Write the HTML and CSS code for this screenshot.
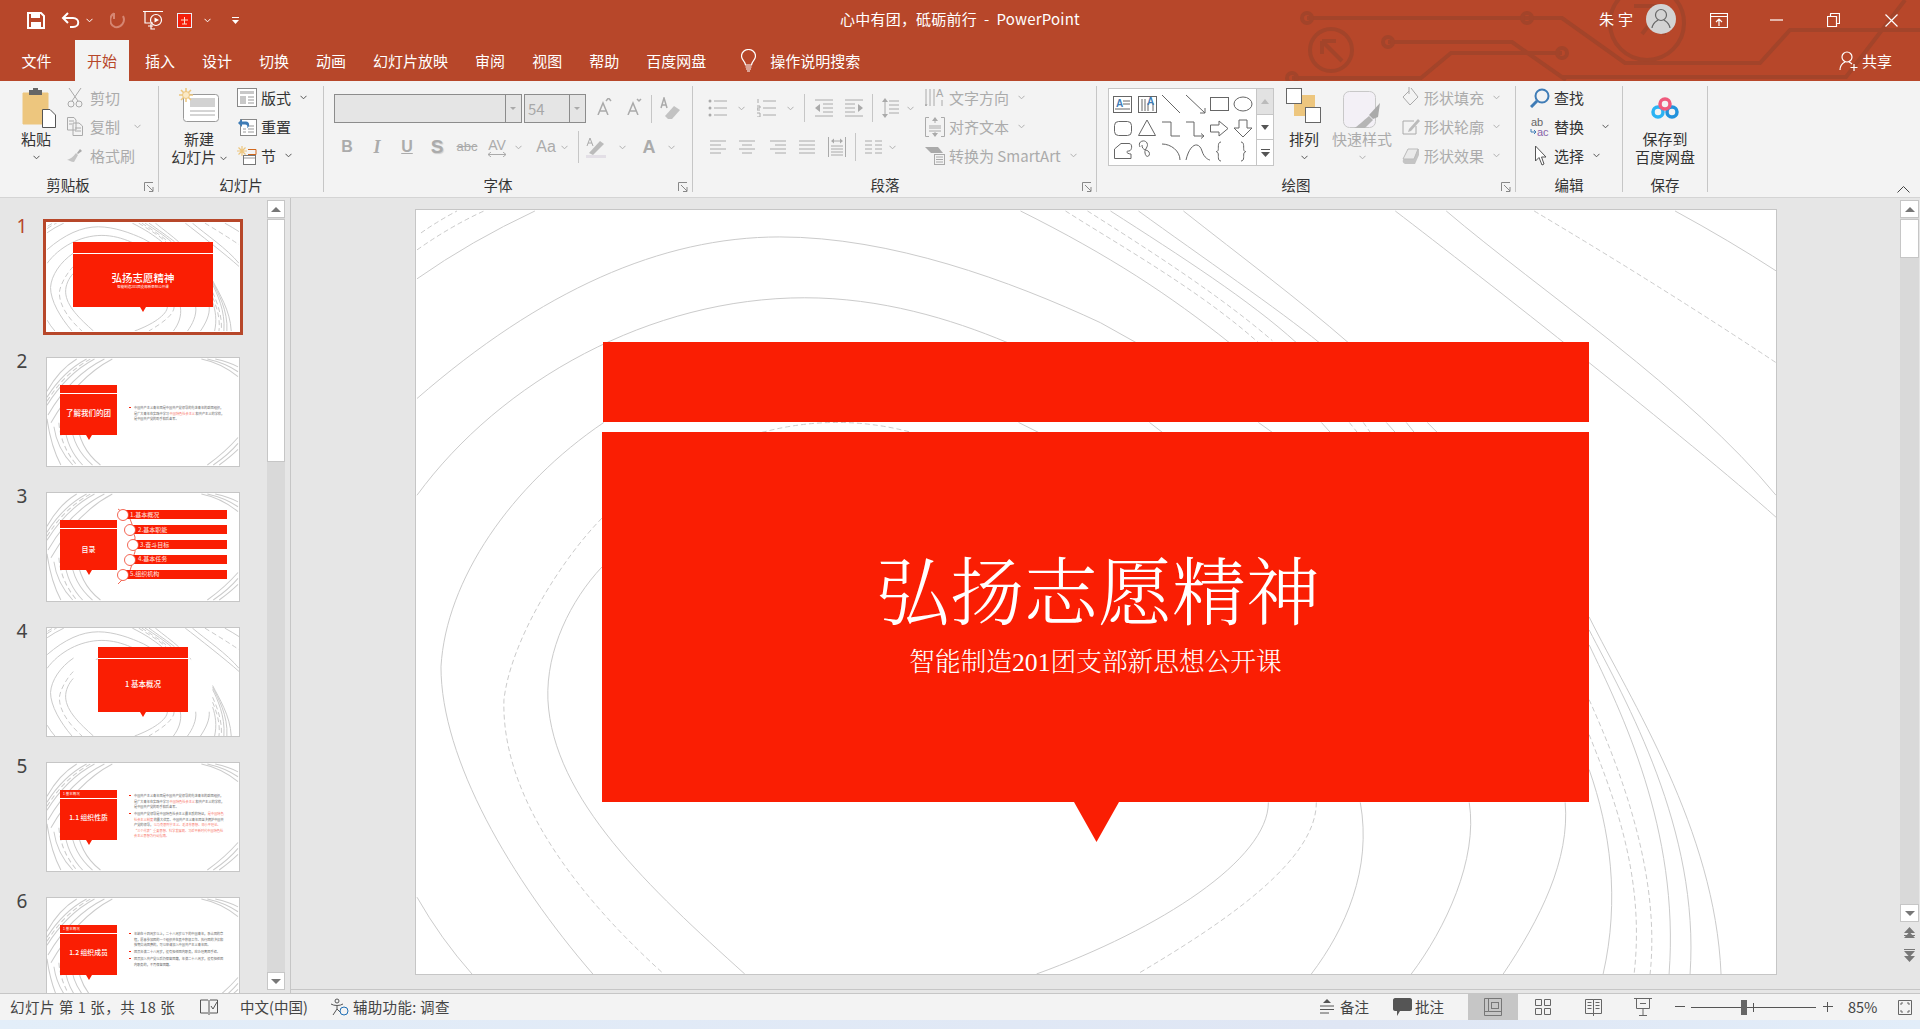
FILE: index.html
```html
<!DOCTYPE html>
<html lang="zh-CN">
<head>
    <meta charset="UTF-8">
    <title>心中有团，砥砺前行 - PowerPoint</title>
    <link rel="stylesheet" href="styles.css">
</head>
<body>
<svg class="defs" width="0" height="0">
    <symbol id="i-chev" viewBox="0 0 7 5"><path d="M.5 .8 3.5 3.8 6.5 .8"/></symbol>
    <symbol id="i-launch" viewBox="0 0 10 10"><path d="M.5 9V.5H9M3 3 9 9M9 5V9.500H5"/></symbol>
    <symbol id="bg-main" viewBox="415 209 1361 766" preserveAspectRatio="none">
        <path class="ln" d="M416 278Q470 240 534 210"/>
        <path class="ln" d="M416 398C540 290 660 236 779 236C890 236 1010 280 1100 322L1150 350"/>
        <path class="ln" d="M416 495C500 380 650 297 804 297C880 297 950 318 1007 342L1030 353"/>
        <path class="ln" d="M603 422C510 485 445 580 440 667C440 760 510 880 592 975"/>
        <path class="ln ds" d="M601 518C560 560 510 640 503 700C500 800 580 900 663 975"/>
        <path class="ln" d="M601 567C570 600 545 650 547 700C552 800 650 890 744 975"/>
        <path class="ln" d="M416 898Q440 940 471 975"/>
        <path class="ln" d="M1268 803C1268 860 1160 930 1036 975"/>
        <path class="ln ds" d="M1316 803C1316 860 1230 920 1137 975"/>
        <path class="ln" d="M1360 803C1372 870 1345 930 1311 975"/>
        <path class="ln" d="M1469 803C1478 860 1445 930 1411 975"/>
        <path class="ln" d="M1565 803C1570 860 1540 920 1503 975"/>
        <path class="ln" d="M1589 617C1630 700 1715 830 1721 975"/>
        <path class="ln" d="M1589 630C1625 700 1700 830 1690 975"/>
        <path class="ln" d="M1589 645C1620 710 1680 830 1669 975"/>
        <path class="ln ds" d="M1589 700C1625 780 1660 880 1650 975"/>
        <path class="ln ds" d="M1589 735C1615 800 1645 880 1634 975"/>
        <path class="ln" d="M1589 770C1610 830 1620 900 1603 975"/>
        <path class="ln" d="M1020 210C1110 255 1170 295 1229 342"/>
        <path class="ln ds" d="M1065 210C1120 245 1200 290 1258 342"/>
        <path class="ln ds" d="M1087 210C1150 250 1220 295 1272 340"/>
        <path class="ln" d="M1110 210C1180 255 1250 300 1296 342"/>
        <path class="ln" d="M1138 210C1200 255 1280 310 1319 342"/>
        <path class="ln" d="M1183 210C1240 255 1300 300 1348 342"/>
        <path class="ln" d="M1395 210C1480 275 1690 440 1776 517"/>
        <path class="ln" d="M1446 210C1540 290 1690 390 1776 495"/>
        <path class="ln ds" d="M1534 210Q1660 285 1776 362"/>
        <path class="ln" d="M1675 210Q1730 240 1776 270"/>
        <path class="ln ds" d="M420 232Q437 220 456 210"/>
        <path class="ln ds" d="M416 249Q450 225 483 210"/>
        <path class="ln" d="M1018 422 1038 432M1149 422 1162 432M1258 422 1272 432M1321 422 1330 432M1386 422 1395 432M1406 422 1414 432M1427 422 1437 432"/>
        <path class="ln ds" d="M761 432Q837 412 911 432M1349 422 1357 432M1363 422 1370 432"/>
    </symbol>
    <symbol id="bg-side" viewBox="0 0 194 110" preserveAspectRatio="none">
        <path class="ln" d="M0 34Q12 12 30 1M0 40Q16 14 40 1M0 48Q20 16 48 1M1 58Q24 18 58 1M4 66Q30 20 66 1"/>
        <path class="ln ds" d="M0 44Q18 15 44 1"/>
        <path class="ln" d="M0 62Q4 90 14 109M7 70Q10 92 26 109M18 70Q20 92 36 109M24 66Q26 92 46 109M30 62Q32 92 54 109"/>
        <path class="ln ds" d="M12 66Q14 90 30 109"/>
        <path class="ln" d="M170 1Q184 4 193 9M162 1Q180 5 193 14M156 1Q176 5 193 19"/>
        <path class="ln" d="M162 109Q180 96 193 81M168 109Q184 98 193 87M174 109Q186 100 193 93"/>
    </symbol>
</svg>

<header class="head">
    <svg class="circuit" viewBox="1280 0 640 81" width="640" height="81">
        <path d="M1307 18H1562L1625 63H1760L1790 30H1920M1388 42H1512L1566 80M1292 78H1421L1451 53H1562M1562 77H1846L1905 0"/>
        <circle cx="1307" cy="18" r="5"/><circle cx="1527" cy="18" r="5"/><circle cx="1388" cy="42" r="5"/><circle cx="1562" cy="53" r="5"/><circle cx="1292" cy="78" r="5"/>
        <circle cx="1331" cy="50" r="21"/><circle cx="1647" cy="23" r="37"/>
        <path d="M1322 41 1342 61M1322 41V54M1322 41H1336M1664 6H1634M1664 6V35M1664 6 1642 34"/>
    </svg>
    <div class="titlebar">
        <div class="qat">
            <svg class="q-save" width="18" height="17" viewBox="0 0 18 17"><path class="w2" d="M1 1H14L17 4V16H1Z"/><path class="wf" d="M4 1H13V6H4ZM4 10H14V16H4Z"/></svg>
            <svg class="q-undo" width="19" height="17" viewBox="0 0 19 17"><path class="w2" d="M7 1 2 6 7 11M2 6H12C19 6 19 15 12 15H9"/></svg>
            <svg class="chev q-c1 lt"><use href="#i-chev"/></svg>
            <svg class="q-redo" width="15" height="17" viewBox="0 0 15 17"><path d="M4 1.500C-1 4-1 13 5 15C11 16 16 10 13 4M4 1V7" fill="none" stroke="#d68672" stroke-width="2"/></svg>
            <svg class="q-show" width="20" height="20" viewBox="0 0 20 20"><path class="w1" d="M0 1.500H20M2 2V13H10M10 16H5M8 14V19H12"/><circle class="w1" cx="13" cy="10" r="5.500"/><path class="wf" d="M11.500 7.500 16 10 11.500 12.500Z"/></svg>
            <svg class="q-pic" width="15" height="15" viewBox="0 0 15 15"><rect x=".5" y=".5" width="14" height="14" fill="#f51e0a" stroke="#e8eef6"/><path d="M4 7H11M7.500 4V11M5 11H10" stroke="#ffd9c9" fill="none"/></svg>
            <svg class="chev q-c2 lt"><use href="#i-chev"/></svg>
            <svg class="q-more" width="7" height="7" viewBox="0 0 7 7"><path d="M0 .5H7" stroke="#fff"/><path d="M0 3H7L3.500 7Z" fill="#fff"/></svg>
        </div>
        <div class="doc-title">心中有团，砥砺前行&nbsp; - &nbsp;PowerPoint</div>
        <div class="win">
            <span class="user">朱宇</span>
            <svg class="avatar" width="30" height="30" viewBox="0 0 30 30"><circle cx="15" cy="15" r="15" fill="#d3d3d3"/><circle cx="15" cy="11" r="5.500" fill="none" stroke="#666" stroke-width="1.200"/><path d="M6 24C7 18 11 17 12 16M24 24C23 18 19 17 18 16" fill="none" stroke="#666" stroke-width="1.200"/></svg>
            <svg class="w-ribbon" width="18" height="15" viewBox="0 0 18 15"><path class="w1" d="M.5 .5H17.500V14.500H.5ZM.5 3.500H17.500M9 13V6M6 9 9 6 12 9"/></svg>
            <svg class="w-min" width="13" height="2" viewBox="0 0 13 2"><path class="w1" d="M0 1H13"/></svg>
            <svg class="w-max" width="13" height="14" viewBox="0 0 13 14"><path class="w1" d="M.5 3.500H9.500V13.500H.5ZM3.500 3V1C3.500 .5 4 .5 4.500 .5H12.500V10.500H10"/></svg>
            <svg class="w-close" width="13" height="13" viewBox="0 0 13 13"><path class="w1" d="M.5 .5 12.500 12.500M12.500 .5 .5 12.500"/></svg>
        </div>
    </div>
    <nav class="tabs">
        <span class="tab tab-file">文件</span>
        <span class="tab active">开始</span>
        <span class="tab">插入</span>
        <span class="tab">设计</span>
        <span class="tab">切换</span>
        <span class="tab">动画</span>
        <span class="tab">幻灯片放映</span>
        <span class="tab">审阅</span>
        <span class="tab">视图</span>
        <span class="tab">帮助</span>
        <span class="tab">百度网盘</span>
        <svg class="bulb" width="15" height="23" viewBox="0 0 15 23"><path class="w1" d="M4.500 16C4 12 .5 11 .5 7C.5 3 4 .5 7.500 .5C11 .5 14.500 3 14.500 7C14.500 11 11 12 10.500 16ZM4.500 18H10.500M5 20H10M6 22H9"/></svg>
        <span class="tab">操作说明搜索</span>
        <span class="share">
            <svg width="20" height="20" viewBox="0 0 20 20"><circle class="w1" cx="8" cy="6" r="5"/><path class="w1" d="M1 19C1 14 4 12 6 11M10 11C11 11.500 12 12 13 13M15 13V20M11.500 16.500H18.500"/></svg>
            共享
        </span>
    </nav>
</header>

<section class="ribbon">
    <div class="group g-clip">
        <div class="body">
            <div class="big paste">
                <svg width="34" height="40" viewBox="0 0 34 40"><path d="M1 5H26V36H1Z" fill="#edc67e" stroke="#edc67e"/><path d="M7 2H20V7H7Z" fill="#666"/><path d="M11 0H16V3H11Z" fill="#666"/><path d="M20.500 21.500H28L33.500 27V39.500H20.500Z" fill="#fff" stroke="#555"/></svg>
                <span class="lbl">粘贴</span>
                <svg class="chev big-chev"><use href="#i-chev"/></svg>
            </div>
            <div class="stack clip-stack off">
                <div class="tool"><svg width="16" height="21" viewBox="0 0 16 21"><path class="g1" d="M2 1 11 14M14 1 5 14"/><circle class="g1" cx="4" cy="17" r="3"/><circle class="g1" cx="12" cy="17" r="3"/></svg><span>剪切</span></div>
                <div class="tool"><svg width="16" height="19" viewBox="0 0 16 19"><path class="g1" d="M.5 .5H7L9 3V13H.5ZM6 6H12L15.500 9V18.500H6ZM2 4H7M2 7H5M8 11H14M8 14H14"/></svg><span>复制</span><svg class="chev c-copy"><use href="#i-chev"/></svg></div>
                <div class="tool"><svg width="16" height="16" viewBox="0 0 16 16"><path d="M9 5 11 7 7 14C4 14 2 12 0 12C3 11 6 9 9 5Z" fill="#c4c4c4"/><path d="M10 5 13 1 15 3 11 6Z" fill="#aaa"/></svg><span>格式刷</span></div>
            </div>
        </div>
        <div class="glabel">剪贴板</div>
        <svg class="launch"><use href="#i-launch"/></svg>
    </div>

    <div class="group g-slides">
        <div class="body">
            <div class="big newslide">
                <svg width="40" height="34" viewBox="0 0 40 34"><rect x="4.500" y="6.500" width="35" height="27" rx="3" fill="#fff" stroke="#999"/><path d="M11 10H36V19H11Z" fill="#d2d2d2"/><path d="M11 23H36M11 27H36" stroke="#aaa"/><path d="M7 0V14M0 7H14M2 2 12 12M12 2 2 12" stroke="#edc67e" stroke-width="1.500"/><circle cx="7" cy="7" r="3.500" fill="#fbe9c6" stroke="#edc67e"/></svg>
                <span class="lbl">新建</span>
                <span class="lbl">幻灯片 <svg class="chev"><use href="#i-chev"/></svg></span>
            </div>
            <div class="stack slide-stack">
                <div class="tool"><svg width="20" height="19" viewBox="0 0 20 19"><rect x=".5" y=".5" width="19" height="18" fill="#fff" stroke="#888"/><path d="M3 3H17V6H3ZM3 8H9V16H3Z" fill="#c8c8c8"/><path d="M11 9H17M11 12H17M11 15H17" stroke="#999"/></svg><span>版式</span><svg class="chev"><use href="#i-chev"/></svg></div>
                <div class="tool"><svg width="20" height="19" viewBox="0 0 20 19"><rect x="3.500" y="2.500" width="16" height="16" fill="#fff" stroke="#888"/><path d="M11 9H17M11 12H17M11 15H17M6 12H9M6 15H9" stroke="#999"/><path d="M1 6 5 2 5 4.500H9C13 4.500 13 10 10 11C11 9 10 7.500 8 7.500H5V10Z" fill="#3f7cb6"/></svg><span>重置</span></div>
                <div class="tool"><svg width="20" height="19" viewBox="0 0 20 19"><path d="M5 0V10M0 5H10M1.500 1.500 8.500 8.500M8.500 1.500 1.500 8.500" stroke="#edc67e" stroke-width="1.200"/><path d="M11 3.500H19V8.500M11 8.500H19" fill="none" stroke="#d2691e"/><rect x="6.500" y="9.500" width="12" height="9" fill="#fff" stroke="#777"/><path d="M7 12H18" stroke="#999"/></svg><span>节</span><svg class="chev"><use href="#i-chev"/></svg></div>
            </div>
        </div>
        <div class="glabel">幻灯片</div>
    </div>

    <div class="group g-font">
        <div class="body col">
            <div class="frow f1 off">
                <div class="combo c-name"><span></span><i class="drop"></i></div>
                <div class="combo c-size"><span>54</span><i class="drop"></i></div>
                <svg class="a-up" width="15" height="17" viewBox="0 0 15 17"><path class="g15" d="M1 17 6 5 11 17M3 13H9M9 3 11.500 0 14 3"/></svg>
                <svg class="a-down" width="15" height="17" viewBox="0 0 15 17"><path class="g15" d="M1 17 6 5 11 17M3 13H9M10 1 12 3 14 1"/></svg>
                <i class="sep s-f1"></i>
                <svg class="erase" width="22" height="23" viewBox="0 0 22 23"><path class="g15" d="M1 11 4 1 7 11M2.500 8H5.500"/><path d="M5 19 14 9 20 13 12 22H8Z" fill="#c2c2c2"/></svg>
            </div>
            <div class="frow f2 off">
                <span class="fb b">B</span><span class="fb i">I</span><span class="fb u">U</span><span class="fb s">S</span><span class="fb abc">abc</span>
                <span class="fb av">AV<svg width="18" height="5" viewBox="0 0 18 5"><path class="g1" d="M0 2.500H18M3 0 0 2.500 3 5M15 0 18 2.500 15 5"/></svg></span>
                <svg class="chev c-av"><use href="#i-chev"/></svg>
                <span class="fb aa">Aa</span>
                <svg class="chev c-aa"><use href="#i-chev"/></svg>
                <i class="sep s-f2"></i>
                <svg class="hl" width="22" height="22" viewBox="0 0 22 22"><path d="M3 17 14 5 18 8 7 19Z" fill="#bbb"/><path d="M0 19H20V22H0Z" fill="#e3dfe6"/><path class="g1" d="M1 10 4 2 7 10M2 7H6"/></svg>
                <svg class="chev c-hl"><use href="#i-chev"/></svg>
                <span class="fb acol">A</span>
                <svg class="chev c-col"><use href="#i-chev"/></svg>
            </div>
        </div>
        <div class="glabel">字体</div>
        <svg class="launch"><use href="#i-launch"/></svg>
    </div>

    <div class="group g-para">
        <div class="body">
            <div class="pcol off">
                <div class="frow p1">
                    <svg class="p-bul" width="19" height="18" viewBox="0 0 19 18"><path class="g1" d="M6 2H19M6 9H19M6 16H19"/><circle cx="2" cy="2" r="1.500" fill="#aaa"/><circle cx="2" cy="9" r="1.500" fill="#aaa"/><circle cx="2" cy="16" r="1.500" fill="#aaa"/></svg>
                    <svg class="chev c-bul"><use href="#i-chev"/></svg>
                    <svg class="p-num" width="19" height="18" viewBox="0 0 19 18"><path class="g1" d="M6 2H19M6 9H19M6 16H19M1 0V4M0 7H3V9H0V11H3M0 14H3V18H0"/></svg>
                    <svg class="chev c-num"><use href="#i-chev"/></svg>
                    <i class="sep s-p1"></i>
                    <svg class="p-in1" width="18" height="18" viewBox="0 0 18 18"><path class="g1" d="M0 1H18M8 5H18M8 9H18M8 13H18M0 17H18"/><path d="M0 9 5 5V13Z" fill="#aaa"/></svg>
                    <svg class="p-in2" width="18" height="18" viewBox="0 0 18 18"><path class="g1" d="M0 1H18M0 5H10M0 9H10M0 13H10M0 17H18"/><path d="M18 9 13 5V13Z" fill="#aaa"/></svg>
                    <i class="sep s-p2"></i>
                    <svg class="p-ls" width="17" height="20" viewBox="0 0 17 20"><path class="g1" d="M7 3H17M7 7H17M7 11H17M7 15H17M3 2V18"/><path d="M3 0 6 4H0ZM3 20 6 16H0Z" fill="#aaa"/></svg>
                    <svg class="chev c-ls"><use href="#i-chev"/></svg>
                </div>
                <div class="frow p2">
                    <svg class="a-l" width="16" height="14" viewBox="0 0 16 14"><path class="g1" d="M0 1H16M0 5H11M0 9H16M0 13H11"/></svg>
                    <svg class="a-c" width="16" height="14" viewBox="0 0 16 14"><path class="g1" d="M0 1H16M3 5H13M0 9H16M3 13H13"/></svg>
                    <svg class="a-r" width="16" height="14" viewBox="0 0 16 14"><path class="g1" d="M0 1H16M5 5H16M0 9H16M5 13H16"/></svg>
                    <svg class="a-j" width="16" height="14" viewBox="0 0 16 14"><path class="g1" d="M0 1H16M0 5H16M0 9H16M0 13H16"/></svg>
                    <svg class="a-d" width="18" height="20" viewBox="0 0 18 20"><path class="g1" d="M.5 0V20M17.500 0V20M3 9H15M3 12H15M3 15H15M3 18H15M4 4H14"/><path d="M3 4 6 1.500V6.500ZM15 4 12 1.500V6.500Z" fill="#aaa"/></svg>
                    <i class="sep s-p3"></i>
                    <svg class="a-cols" width="17" height="14" viewBox="0 0 17 14"><path class="g1" d="M0 1H7M10 1H17M0 5H7M10 5H17M0 9H7M10 9H17M0 13H7M10 13H17"/></svg>
                    <svg class="chev c-cols"><use href="#i-chev"/></svg>
                </div>
            </div>
            <div class="stack para-stack off">
                <div class="tool"><svg width="20" height="23" viewBox="0 0 20 23"><path class="g1" d="M1 3V20M5 3V20M9 3V20M17 14V20M1 20 0 18M1 20 2 18"/><text x="11" y="11" class="gt">A</text></svg><span>文字方向</span><svg class="chev"><use href="#i-chev"/></svg></div>
                <div class="tool"><svg width="20" height="20" viewBox="0 0 20 20"><path class="g1" d="M4 .5H.5V19.500H4M16 .5H19.500V19.500H16M4 9H16M4 11H16M4 14H16M10 1V6M10 19V15"/><path d="M10 0 13 4H7ZM10 20 13 16H7Z" fill="#aaa"/></svg><span>对齐文本</span><svg class="chev"><use href="#i-chev"/></svg></div>
                <div class="tool"><svg width="20" height="18" viewBox="0 0 20 18"><path d="M0 0H13L18 6H6Z" fill="#aaa"/><rect x="9.500" y="7.500" width="10" height="10" fill="#f3f3f3" stroke="#aaa"/><path class="g1" d="M11 10H18M11 12.500H18M11 15H18"/></svg><span class="sa">转换为 SmartArt</span><svg class="chev"><use href="#i-chev"/></svg></div>
            </div>
        </div>
        <div class="glabel">段落</div>
        <svg class="launch"><use href="#i-launch"/></svg>
    </div>

    <div class="group g-draw">
        <div class="body">
            <div class="gallery">
                <svg class="shapes" width="147" height="76" viewBox="0 0 147 76">
                    <rect x="4.500" y="7.500" width="18" height="16"/><text x="7" y="18" class="blue">A</text><path d="M14 12H21M14 15H21M6 20H21"/>
                    <rect x="29.500" y="7.500" width="18" height="16"/><path d="M33 10V22M36 10V22M39 14V22M44 14V22"/><text x="38" y="16" class="blue">A</text>
                    <path d="M53 6 71 24M77 6 96 24M96 24H91M96 24V19"/>
                    <rect x="101.500" y="8.500" width="18" height="13"/><ellipse cx="134" cy="15" rx="9" ry="7"/>
                    <rect x="5.500" y="32.500" width="17" height="14" rx="4"/><path d="M38 31 29.500 46.500H46.500ZM53 33H62V47H71M77 33H85V47H95M95 47 92 44.500M95 47 92 49.500"/>
                    <path d="M101.500 36H110V32L119 39.500 110 47V43H101.500ZM130 31H138V39H143L134 48 125 39H130Z"/>
                    <path d="M5.500 69.500V60L12 54.500H20C24 54.500 23 62 20 62C16 62 18 65 22 65V69.500ZM31 58C28 52 36 50 38 54C40 58 35 60 36 64C37 70 42 67 40 63C38 60 33 62 33 56"/>
                    <path d="M53 55C62 55 71 62 71 71M77 71C81 54 90 52 93 62C95 69 100 71 101 71"/>
                    <path d="M112 53C108 53 110 60 109 61.500C108 63 107 62.500 107 62.500C107 62.500 108 62.500 109 64C110 66 108 72 112 72M132 53C136 53 134 60 135 61.500C136 63 137 62.500 137 62.500C137 62.500 136 62.500 135 64C134 66 136 72 132 72"/>
                </svg>
                <div class="g-scroll">
                    <span class="gs gs-up"><i class="tri up"></i></span>
                    <span class="gs"><i class="tri dn"></i></span>
                    <span class="gs"><svg width="9" height="8" viewBox="0 0 9 8"><path d="M0 .5H9" stroke="#555"/><path d="M0 3H9L4.500 8Z" fill="#555"/></svg></span>
                </div>
            </div>
            <div class="big arrange">
                <svg width="36" height="36" viewBox="0 0 36 36"><path d="M8 7H29V28H8Z" fill="#edc67e"/><rect x=".5" y=".5" width="15" height="15" fill="#fff" stroke="#666"/><rect x="19.500" y="19.500" width="15" height="15" fill="#fff" stroke="#666"/></svg>
                <span class="lbl">排列</span>
                <svg class="chev big-chev"><use href="#i-chev"/></svg>
            </div>
            <div class="big quick off">
                <svg width="38" height="37" viewBox="0 0 38 37"><rect x=".5" y=".5" width="32" height="36" rx="6" fill="#f3f0f6" stroke="#c8c8c8"/><path d="M37 12 35 26 30 28 26 24Z" fill="#aaa"/><path d="M26 25 30 29 22 37H11C14 36 20 30 26 25Z" fill="#b5b5b5"/></svg>
                <span class="lbl">快速样式</span>
                <svg class="chev big-chev"><use href="#i-chev"/></svg>
            </div>
            <div class="stack draw-stack off">
                <div class="tool"><svg width="18" height="21" viewBox="0 0 18 21"><path class="g1" d="M9 1 16 10 8 18 1 10 7 4M7 0V7"/></svg><span>形状填充</span><svg class="chev"><use href="#i-chev"/></svg></div>
                <div class="tool"><svg width="18" height="18" viewBox="0 0 18 18"><path class="g1" d="M12 3H1V16H14V8"/><path d="M7 11 16 1 18 3 9 13 6 14Z" fill="#bbb"/></svg><span>形状轮廓</span><svg class="chev"><use href="#i-chev"/></svg></div>
                <div class="tool"><svg width="18" height="18" viewBox="0 0 18 18"><path d="M1 13 6 2H17V8L13 17H4C2 17 0 15 1 13Z" fill="#c4c4c4"/><path d="M1 12 6 2H16L12 12Z" fill="#eaeaea" stroke="#bbb"/></svg><span>形状效果</span><svg class="chev"><use href="#i-chev"/></svg></div>
            </div>
        </div>
        <div class="glabel">绘图</div>
        <svg class="launch"><use href="#i-launch"/></svg>
    </div>

    <div class="group g-edit">
        <div class="body">
            <div class="stack edit-stack">
                <div class="tool"><svg width="20" height="20" viewBox="0 0 20 20"><circle cx="12" cy="8" r="6.500" fill="none" stroke="#3f7cb6" stroke-width="2"/><path d="M7 13 1 19" stroke="#3f7cb6" stroke-width="3"/></svg><span>查找</span></div>
                <div class="tool"><svg class="abac" width="20" height="20" viewBox="0 0 20 20"><text x="1" y="9" class="ab">ab</text><text x="7" y="19" class="ab ac">ac</text><path d="M1 12V15H6M4 13 6 15 4 17" fill="none" stroke="#3f7cb6"/></svg><span>替换</span><svg class="chev c-rep"><use href="#i-chev"/></svg></div>
                <div class="tool"><svg width="20" height="22" viewBox="0 0 20 22"><path d="M5.500 1V16L9 12.500 12 20 14 19 11.500 12H16Z" fill="#fff" stroke="#555"/></svg><span>选择</span><svg class="chev"><use href="#i-chev"/></svg></div>
            </div>
        </div>
        <div class="glabel">编辑</div>
    </div>

    <div class="group g-save">
        <div class="body">
            <div class="big pan">
                <svg width="28" height="22" viewBox="0 0 28 22"><circle cx="7" cy="15" r="5" fill="none" stroke="#2bb3f3" stroke-width="3.500"/><circle cx="21" cy="15" r="5" fill="none" stroke="#2192dc" stroke-width="3.500"/><circle cx="14" cy="7" r="5" fill="none" stroke="#ef5a7c" stroke-width="3.500"/></svg>
                <span class="lbl">保存到</span>
                <span class="lbl">百度网盘</span>
            </div>
        </div>
        <div class="glabel">保存</div>
    </div>
    <svg class="collapse" width="13" height="7" viewBox="0 0 13 7"><path d="M.5 6.500 6.500 .5 12.500 6.500" fill="none" stroke="#444"/></svg>
</section>

<main class="main">
    <aside class="pane">
        <div class="thumbs">
            <div class="trow cur">
                <span class="num">1</span>
                <div class="thumb">
                    <svg class="tbg"><use href="#bg-main"/></svg>
                    <div class="call c-wide"><b class="t1">弘扬志愿精神</b><em class="t1s">智能制造201团支部新思想公开课</em></div>
                </div>
            </div>
            <div class="trow">
                <span class="num">2</span>
                <div class="thumb">
                    <svg class="tbg"><use href="#bg-side"/></svg>
                    <div class="call c-side"><b>了解我们的团</b></div>
                    <ul class="mini m2">
                        <li>中国共产主义青年团是中国共产党领导的先进青年的群团组织，是广大青年在实践中学习<u>中国特色社会主义</u>和共产主义的学校，是中国共产党的助手和后备军。</li>
                    </ul>
                </div>
            </div>
            <div class="trow">
                <span class="num">3</span>
                <div class="thumb">
                    <svg class="tbg"><use href="#bg-side"/></svg>
                    <div class="call c-side"><b class="t-mu">目录</b></div>
                    <svg class="toc" width="194" height="110" viewBox="0 0 194 110">
                        <path class="chain" d="M72 17Q90 28 85 37Q92 46 87 52Q92 60 85 67Q90 76 72 92"/>
                        <rect x="78" y="18" width="103" height="9"/><rect x="86" y="33" width="95" height="9"/><rect x="88" y="48" width="93" height="9"/><rect x="86" y="63" width="95" height="9"/><rect x="78" y="78" width="103" height="9"/>
                        <circle cx="77" cy="23" r="5.500"/><circle cx="84" cy="38" r="5.500"/><circle cx="87" cy="53" r="5.500"/><circle cx="84" cy="68" r="5.500"/><circle cx="77" cy="83" r="5.500"/>
                        <text x="84" y="25">1.基本概况</text><text x="92" y="40">2.基本职能</text><text x="94" y="55">3.奋斗目标</text><text x="92" y="69">4.基本任务</text><text x="84" y="84">5.组织机构</text>
                    </svg>
                </div>
            </div>
            <div class="trow">
                <span class="num">4</span>
                <div class="thumb">
                    <svg class="tbg"><use href="#bg-main"/></svg>
                    <div class="call c-mid"><b class="t-mid">1 基本概况</b></div>
                </div>
            </div>
            <div class="trow">
                <span class="num">5</span>
                <div class="thumb">
                    <svg class="tbg"><use href="#bg-side"/></svg>
                    <div class="call c-side"><span class="chip">1 基本概况</span><b class="t-sub">1.1 组织性质</b></div>
                    <ul class="mini">
                        <li>中国共产主义青年团是中国共产党领导的先进青年的群团组织，是广大青年在实践中学习<u>中国特色社会主义</u>和共产主义的学校，是中国共产党的助手和后备军。</li>
                        <li>中国共产党领导是中国特色社会主义最本质的特征，<u>是中国特色社会主义制度</u>的最大优势。中国共产主义青年团坚决拥护中国共产党的领导，<u>以马克思列宁主义、毛泽东思想、邓小平理论、“三个代表”重要思想、科学发展观、习近平新时代中国特色社会主义思想为行动指南。</u></li>
                    </ul>
                </div>
            </div>
            <div class="trow">
                <span class="num">6</span>
                <div class="thumb">
                    <svg class="tbg"><use href="#bg-side"/></svg>
                    <div class="call c-side"><span class="chip">1 基本概况</span><b class="t-sub">1.2 组织成员</b></div>
                    <ul class="mini m6">
                        <li>年龄在十四周岁以上，二十八周岁以下的中国青年，承认团的章程，愿意参加团的一个组织并在其中积极工作、执行团的决议和按期交纳团费的，可以申请加入中国共产主义青年团。</li>
                        <li>团员年满二十八周岁，没有担任团内职务，应办理离团手续。</li>
                        <li>团员加入共产党以后仍保留团籍，年满二十八周岁，没有担任团内职务的，不再保留团籍。</li>
                    </ul>
                </div>
            </div>
        </div>
        <div class="scroll s-pane">
            <span class="sbtn"><i class="tri up"></i></span>
            <span class="sthumb"></span>
            <span class="strack"></span>
            <span class="sbtn"><i class="tri dn"></i></span>
        </div>
    </aside>
    <div class="editor">
        <div class="canvas">
            <div class="slide">
                <svg class="sbg"><use href="#bg-main"/></svg>
                <div class="band"></div>
                <div class="hero">
                    <h1>弘扬志愿精神</h1>
                    <p>智能制造201团支部新思想公开课</p>
                </div>
                <div class="pointer"></div>
            </div>
            <div class="rail">
                <div class="scroll s-main">
                    <span class="sbtn"><i class="tri up"></i></span>
                    <span class="sthumb"></span>
                    <span class="strack"></span>
                    <span class="sbtn"><i class="tri dn"></i></span>
                </div>
                <svg class="pg" width="13" height="13" viewBox="0 0 13 13"><path d="M6.500 0 12 6H1ZM1 8H12V9H1ZM6.500 5 12 11H1Z" fill="#777"/></svg>
                <svg class="pg" width="13" height="13" viewBox="0 0 13 13"><path d="M1 0H12V1H1ZM1 2H12L6.500 8ZM1 7H12L6.500 13Z" fill="#777"/></svg>
            </div>
        </div>
    </div>
</main>

<footer class="status">
    <span class="st-count">幻灯片 第 1 张，共 18 张</span>
    <svg class="st-spell" width="18" height="17" viewBox="0 0 18 17"><path class="s1" d="M8 1H.5V14H8M10 1H17.500V14H10M9 1V16"/><path class="s1" d="M11 7 13 10 17 3"/></svg>
    <span class="st-lang">中文(中国)</span>
    <svg class="st-acc" width="20" height="18" viewBox="0 0 20 18"><circle class="s1" cx="7" cy="3" r="2"/><path class="s1" d="M1 6C4 8 10 8 13 6M7 8V11L3 17M7 11 10 14"/><circle cx="14" cy="13" r="4" fill="none" stroke="#1f6fb5"/></svg>
    <span class="st-acc-t">辅助功能: 调查</span>
    <span class="st-right">
        <svg class="st-note" width="14" height="16" viewBox="0 0 14 16"><path d="M7 0 11 4H3Z" fill="#555"/><path class="s1" d="M0 7H14M0 10.500H14M0 14H9"/></svg>
        <span>备注</span>
        <svg class="st-cmt" width="19" height="18" viewBox="0 0 19 18"><path d="M2 0H17C18 0 19 1 19 2V11C19 12 18 13 17 13H7L4 18V13H2C1 13 0 12 0 11V2C0 1 1 0 2 0Z" fill="#555"/></svg>
        <span class="t-cmt">批注</span>
        <span class="view on"><svg width="18" height="18" viewBox="0 0 18 18"><path d="M.5 .5H17.500V17.500H.5ZM4.500 .5V13.500H17.500M.5 13.500H4.500" fill="none" stroke="#777"/><rect x="7.500" y="4.500" width="7" height="6" fill="none" stroke="#777"/></svg></span>
        <span class="view"><svg width="16" height="16" viewBox="0 0 16 16"><path class="s2" d="M.5 .5H6.500V6.500H.5ZM9.500 .5H15.500V6.500H9.500ZM.5 9.500H6.500V15.500H.5ZM9.500 9.500H15.500V15.500H9.500Z"/></svg></span>
        <span class="view"><svg width="17" height="18" viewBox="0 0 17 18"><path class="s2" d="M.5 1.500H8.500V15.500H.5ZM8.500 1.500H16.500V15.500H8.500ZM2.500 4.500H6.500M2.500 7.500H6.500M2.500 10.500H6.500M10.500 4.500H14.500M10.500 7.500H14.500M10.500 10.500H14.500M8.500 15.500V18"/></svg></span>
        <span class="view"><svg width="18" height="18" viewBox="0 0 18 18"><path class="s2" d="M0 .5H18M2.500 1V10.500H15.500V1M9 11V17M5 17.500H13M6 5.500H12"/></svg></span>
        <span class="zoom-minus"></span>
        <span class="slider"><i class="mark"></i><i class="knob"></i></span>
        <span class="zoom-plus"></span>
        <span class="pct">85%</span>
        <svg class="st-fit" width="14" height="15" viewBox="0 0 14 15"><path class="s2" d="M.5 .5H13.500V14.500H.5ZM3 3H5M3 3V5M11 3H9M11 3V5M3 12H5M3 12V10M11 12H9M11 12V10"/></svg>
    </span>
</footer>
<div class="desktop"></div>
</body>
</html>
```

FILE: styles.css
```css
* {
    box-sizing: border-box;
}
html, body {
    margin: 0;
    width: 1920px;
    height: 1029px;
    overflow: hidden;
}
body {
    font-family: "Noto Sans CJK SC", "Noto Sans", sans-serif;
    font-size: 15px;
    color: #333;
    background: #e6e6e6;
}
svg {
    display: block;
    flex: none;
}
.defs {
    position: absolute;
}
i, em, u {
    font-style: normal;
    text-decoration: none;
}

/* shared icon strokes */
.chev {
    width: 7px;
    height: 5px;
    fill: none;
    stroke: #555;
    display: inline-block;
    vertical-align: middle;
}
.chev.lt {
    stroke: #fff;
}
.off .chev {
    stroke: #b0b0b0;
}
.launch {
    position: absolute;
    right: 4px;
    bottom: 0;
    width: 10px;
    height: 10px;
    fill: none;
    stroke: #888;
}
.w1 { fill: none; stroke: #fff; stroke-width: 1.2; }
.w2 { fill: none; stroke: #fff; stroke-width: 2; }
.wf { fill: #fff; }
.g1 { fill: none; stroke: #aaa; }
.g15 { fill: none; stroke: #aaa; stroke-width: 1.5; }
.gt { font: 11px "Liberation Sans", sans-serif; fill: #aaa; }
.s1 { fill: none; stroke: #555; }
.s2 { fill: none; stroke: #666; }

/* title bar and tabs */
.head {
    position: relative;
    height: 81px;
    background: #b7472a;
    color: #fff;
}
.circuit {
    position: absolute;
    left: 1280px;
    top: 0;
    fill: none;
    stroke: #a3442a;
    stroke-width: 4;
}
.titlebar {
    position: relative;
    height: 40px;
    display: grid;
    grid-template-columns: 1fr auto 1fr;
    align-items: center;
}
.qat, .win {
    display: flex;
    align-items: center;
}
.qat {
    padding-left: 27px;
}
.q-undo { margin-left: 16px; }
.q-c1 { margin-left: 6px; }
.q-redo { margin-left: 17px; }
.q-show { margin-left: 18px; }
.q-pic { margin-left: 14px; }
.q-c2 { margin-left: 12px; }
.q-more { margin-left: 21px; }
.doc-title {
    font-size: 15px;
    line-height: 20px;
    letter-spacing: .2px;
    margin-top: -2px;
}
.win {
    justify-content: flex-end;
    padding-right: 22px;
}
.user {
    letter-spacing: 4px;
    line-height: 20px;
    margin-top: -2px;
}
.avatar { margin-left: 9px; margin-top: -2px; }
.w-ribbon { margin-left: 34px; }
.w-min { margin-left: 42px; }
.w-max { margin-left: 44px; }
.w-close { margin-left: 45px; }

.tabs {
    position: relative;
    height: 41px;
    display: flex;
    align-items: stretch;
    padding-left: 8px;
}
.tab {
    padding: 0 13.500px;
    line-height: 41px;
    font-size: 15px;
    white-space: nowrap;
}
.tab-file {
    margin-right: 10px;
}
.tab.active {
    background: #f3f3f3;
    color: #b7472a;
    padding: 0 12px;
    margin-right: 2.500px;
}
.bulb {
    margin: 9px 1px 0 21px;
}
.share {
    position: absolute;
    right: 28px;
    top: 0;
    display: flex;
    align-items: center;
    gap: 3px;
    line-height: 41px;
}

/* ribbon */
.ribbon {
    position: relative;
    height: 117px;
    display: flex;
    align-items: flex-start;
    background: #f3f3f3;
    border-bottom: 1px solid #d4d4d4;
    padding-top: 5px;
}
.group {
    position: relative;
    height: 106px;
    display: flex;
    flex-direction: column;
    border-right: 1px solid #c6c6c6;
}
.body {
    flex: 1;
    display: flex;
    min-height: 0;
}
.col {
    flex-direction: column;
}
.glabel {
    height: 19px;
    line-height: 24px;
    text-align: center;
    font-size: 14.500px;
    color: #333;
}
.g-clip { width: 159px; }
.g-slides { width: 165px; }
.g-font { width: 369px; }
.g-para { width: 404px; }
.g-draw { width: 419px; }
.g-edit { width: 107px; }
.g-save { width: 85px; }
.g-clip .glabel { padding-right: 22px; }
.g-font .glabel { padding-right: 20px; }
.g-para .glabel { padding-right: 19px; }
.g-draw .glabel { padding-right: 20px; }
.off,
.off span {
    color: #ababab;
}

.big {
    display: flex;
    flex-direction: column;
    align-items: center;
    padding-top: 2px;
}
.lbl {
    line-height: 18px;
    white-space: nowrap;
}
.big > svg:first-child {
    margin-bottom: 8px;
}
.big-chev {
    margin-top: 7px;
}
.paste { margin-left: 18px; width: 36px; }
.paste > svg:first-child {
    align-self: flex-end;
    margin-right: -2px;
    margin-bottom: 2px;
}
.newslide { margin-left: 11px; width: 58px; }
.arrange { margin-left: 12px; width: 36px; }
.arrange > svg:first-child { margin-bottom: 6px; }
.quick { margin-left: 10px; width: 60px; padding-top: 5px; }
.quick > svg:first-child { margin-bottom: 2px; }
.pan { width: 84px; padding-top: 11px; }
.pan > svg:first-child { margin-bottom: 11px; }

.stack {
    display: flex;
    flex-direction: column;
    margin-top: -3px;
}
.tool {
    height: 29px;
    display: flex;
    align-items: center;
    gap: 4px;
    white-space: nowrap;
    line-height: 20px;
}
.tool .chev {
    margin-left: 5px;
}
.clip-stack { margin-left: 13px; }
.clip-stack .tool { gap: 7px; }
.clip-stack .c-copy { margin-left: 7px; }
.slide-stack { margin-left: 9px; }
.para-stack { margin-left: 10px; }
.draw-stack { margin-left: 10px; }
.edit-stack { margin-left: 14px; }
.c-rep { margin-left: 14px !important; }

/* font and paragraph rows */
.frow {
    display: flex;
    align-items: center;
}
.sep {
    display: block;
    width: 1px;
    height: 28px;
    background: #c6c6c6;
    flex: none;
}
.f1 {
    height: 29px;
    margin: 8px 0 0 10px;
}
.f2 {
    height: 30px;
    margin: 9px 0 0 8px;
}
.combo {
    height: 29px;
    display: flex;
    background: #e5e5e5;
    border: 1px solid #8c8c8c;
}
.combo span {
    flex: 1;
    padding-left: 3px;
    line-height: 27px;
    font-size: 15px;
    color: #a8a8a8;
}
.drop {
    position: relative;
    width: 16px;
    border-left: 1px solid #8c8c8c;
}
.drop::after {
    content: "";
    position: absolute;
    left: 4px;
    top: 12px;
    border: 3px solid transparent;
    border-top: 3px solid #aaa;
}
.c-name { width: 188px; }
.c-size { width: 62px; margin-left: 2px; }
.a-up { margin-left: 11px; margin-top: -4px; }
.a-down { margin-left: 15px; margin-top: -4px; }
.s-f1 { margin-left: 9px; }
.erase { margin-left: 8px; }
.fb {
    width: 30px;
    text-align: center;
    font-family: "Liberation Sans", sans-serif;
    font-size: 16px;
    color: #ababab;
    line-height: 20px;
}
.fb.b { font-weight: bold; }
.fb.i { font-style: italic; font-family: "Liberation Serif", serif; font-size: 18px; font-weight: bold; }
.fb.u { text-decoration: underline; font-weight: bold; }
.fb.s { font-weight: bold; font-size: 19px; text-shadow: 1px 1px 1px #ccc; }
.fb.abc { font-size: 13px; text-decoration: line-through; }
.fb.av { font-size: 14px; line-height: 14px; display: flex; flex-direction: column; align-items: center; }
.fb.aa { margin-left: 9px; }
.fb.acol { width: 24px; margin-left: 11px; font-weight: bold; font-size: 18px; }
.c-av { margin-left: 3px; }
.c-aa { margin-left: 0; }
.s-f2 { margin-left: 10px; height: 32px; }
.hl { margin-left: 7px; }
.c-hl { margin-left: 11px; }
.c-col { margin-left: 7px; }

.pcol {
    width: 222px;
}
.p1 {
    height: 30px;
    margin: 7px 0 0 15px;
}
.p2 {
    height: 30px;
    margin: 9px 0 0 17px;
}
.c-bul { margin-left: 11px; }
.p-num { margin-left: 12px; }
.c-num { margin-left: 11px; }
.s-p1 { margin-left: 10px; }
.p-in1 { margin-left: 10px; }
.p-in2 { margin-left: 12px; }
.s-p2 { margin-left: 9px; }
.p-ls { margin-left: 9px; }
.c-ls { margin-left: 8px; }
.a-c { margin-left: 13px; }
.a-r { margin-left: 15px; }
.a-j { margin-left: 13px; }
.a-d { margin-left: 13px; }
.s-p3 { margin-left: 9px; }
.a-cols { margin-left: 9px; }
.c-cols { margin-left: 7px; }

/* shape gallery */
.gallery {
    width: 166px;
    height: 78px;
    margin: 2px 0 0 11px;
    display: flex;
    background: #fff;
    border: 1px solid #c6c6c6;
}
.shapes {
    fill: none;
    stroke: #666;
}
.shapes .blue {
    font: bold 10px "Liberation Sans", sans-serif;
    fill: #3f7cb6;
    stroke: none;
}
.g-scroll {
    width: 19px;
    display: flex;
    flex-direction: column;
    border-left: 1px solid #c6c6c6;
}
.gs {
    flex: 1;
    display: flex;
    align-items: center;
    justify-content: center;
    border-bottom: 1px solid #c6c6c6;
}
.gs:last-child {
    border-bottom: 0;
}
.gs-up {
    background: #e2e2e2;
}
.tri {
    display: block;
    width: 0;
    height: 0;
    border-left: 5px solid transparent;
    border-right: 5px solid transparent;
}
.tri.up { border-bottom: 5px solid #777; }
.tri.dn { border-top: 5px solid #777; }
.gs .tri { border-left-width: 4px; border-right-width: 4px; }
.gs-up .tri.up { border-bottom-color: #bbb; }
.gs .tri.dn { border-top-color: #555; }

.ab {
    font: 11px "Liberation Sans", sans-serif;
    fill: #666;
}
.ac { fill: #8763a8; }
.abac { overflow: visible; }
.collapse {
    position: absolute;
    left: 1897px;
    top: 105px;
}

/* main area */
.main {
    display: flex;
    height: 795px;
    overflow: hidden;
}
.pane {
    width: 291px;
    flex: none;
    display: flex;
    align-items: flex-start;
    border-right: 1px solid #c6c6c6;
}
.thumbs {
    width: 267px;
    height: 795px;
    overflow: hidden;
    display: flex;
    flex-direction: column;
    gap: 25px;
    padding-top: 24px;
}
.trow {
    display: flex;
    flex: none;
}
.num {
    width: 46px;
    padding-right: 2px;
    text-align: center;
    font-family: "Noto Sans", sans-serif;
    font-size: 19px;
    line-height: 20px;
    color: #444;
    margin-top: -6px;
}
.cur .num {
    color: #b7472a;
}
.thumb {
    position: relative;
    width: 194px;
    height: 110px;
    background: #fff;
    border: 1px solid #c6c6c6;
    overflow: hidden;
    flex: none;
}
.cur .thumb {
    overflow: visible;
    box-shadow: 0 0 0 3px #b7472a;
    border-color: #fff;
}
.tbg, .sbg {
    position: absolute;
    left: 0;
    top: 0;
    width: 100%;
    height: 100%;
}
.ln {
    fill: none;
    stroke: #cbcbcb;
    stroke-width: 1;
    vector-effect: non-scaling-stroke;
}
.ln.ds {
    stroke-dasharray: 5 3;
}

/* thumbnail callouts */
.call {
    position: absolute;
    background: #fa1e03;
    color: #fff;
    display: flex;
    flex-direction: column;
    align-items: center;
    justify-content: center;
}
.call::before {
    content: "";
    position: absolute;
    left: 0;
    right: 0;
    height: 1px;
    background: #fff;
}
.call::after {
    content: "";
    position: absolute;
    top: 100%;
    border-left: 3px solid transparent;
    border-right: 3px solid transparent;
    border-top: 5px solid #fa1e03;
}
.call b {
    font-weight: 500;
    white-space: nowrap;
}
.c-wide {
    left: 26px;
    top: 19px;
    width: 140px;
    height: 65px;
}
.c-wide::before { top: 11px; }
.c-wide::after { left: 67px; }
.t1 { font-size: 10.500px; line-height: 12px; margin-top: 12px; }
.t1s { font-size: 3.500px; line-height: 6px; white-space: nowrap; }
.c-mid {
    left: 51px;
    top: 19px;
    width: 90px;
    height: 65px;
}
.c-mid::before { top: 11px; }
.c-mid::after { left: 42px; }
.t-mid { font-size: 7.500px; margin-top: 9px; line-height: 10px; }
.c-side {
    left: 13px;
    top: 27px;
    width: 57px;
    height: 50px;
}
.c-side::before { top: 8px; }
.c-side::after { left: 26px; }
.c-side b { font-size: 7.500px; line-height: 10px; margin-top: 6px; }
.c-side b.t-mu { font-size: 7px; margin-top: 8px; }
.c-side b.t-sub { font-size: 6.800px; margin-top: 4px; }
.chip {
    position: absolute;
    left: 3px;
    top: 1px;
    font-size: 3.500px;
    line-height: 6px;
}
.mini {
    position: absolute;
    left: 82px;
    top: 30px;
    width: 96px;
    margin: 0;
    padding: 0;
    list-style: none;
    font-size: 3.200px;
    line-height: 5.500px;
    color: #666;
}
.m2 { top: 47px; }
.m6 { top: 33px; }
.mini li {
    position: relative;
    padding-left: 5px;
    margin-bottom: 1.500px;
}
.mini li::before {
    content: "";
    position: absolute;
    left: 0;
    top: 2px;
    width: 2px;
    height: 1px;
    background: #fa1e03;
}
.mini u {
    color: #f8766a;
    margin: 0 .5px;
}
.toc {
    position: absolute;
    left: -1px;
    top: -1px;
}
.toc rect { fill: #fa1e03; }
.toc circle { fill: #fff; stroke: #f0402a; stroke-width: .8; }
.toc .chain { fill: none; stroke: #f0402a; stroke-width: .8; }
.toc text { font-size: 6px; font-weight: 500; fill: #ffd5cc; }

/* scroll bars */
.scroll {
    width: 18px;
    display: flex;
    flex-direction: column;
    flex: none;
    background: #d9d9d9;
}
.sbtn {
    height: 18px;
    flex: none;
    display: flex;
    align-items: center;
    justify-content: center;
    background: #fff;
    border: 1px solid #c6c6c6;
}
.sthumb {
    flex: none;
    background: #fff;
    border: 1px solid #c6c6c6;
}
.strack {
    flex: 1;
}
.s-pane {
    height: 790px;
    margin-top: 2px;
}
.s-pane .sthumb { height: 243px; margin-top: 1px; }
.s-main {
    width: 19px;
    height: 722px;
}
.s-main .sthumb { height: 39px; margin-top: 1px; }

/* editor */
.editor {
    flex: 1;
    min-width: 0;
    height: 795px;
}
.canvas {
    height: 792px;
    display: flex;
    align-items: flex-start;
    padding: 11px 1px 0 124px;
    border-bottom: 1px solid #c6c6c6;
}
.slide {
    position: relative;
    width: 1362px;
    height: 766px;
    flex: none;
    background: #fff;
    border: 1px solid #c6c6c6;
}
.band {
    position: absolute;
    left: 187px;
    top: 132px;
    width: 986px;
    height: 80px;
    background: #fa1e03;
}
.hero {
    position: absolute;
    left: 186px;
    top: 222px;
    width: 987px;
    height: 370px;
    background: #fa1e03;
    color: #fff;
    text-align: center;
    padding-top: 115px;
    font-family: "Liberation Serif", "Noto Serif CJK SC", "Noto Sans CJK SC", serif;
}
.hero h1 {
    margin: 0 0 0 5px;
    font-size: 74px;
    font-weight: 300;
    line-height: 94px;
}
.hero p {
    margin: 4px 0 0;
    font-size: 25.700px;
    font-weight: 300;
    line-height: 36px;
}
.pointer {
    position: absolute;
    left: 658px;
    top: 592px;
    width: 45px;
    height: 40px;
    background: #fa1e03;
    clip-path: polygon(0 0, 100% 0, 50% 100%);
}
.rail {
    margin-left: auto;
    margin-top: -9px;
    width: 19px;
    display: flex;
    flex-direction: column;
    align-items: center;
}
.pg {
    margin-top: 9px;
}
.s-main + .pg {
    margin-top: 5px;
}

/* status bar */
.status {
    height: 27px;
    display: flex;
    align-items: center;
    background: #f3f3f3;
    border-top: 1px solid #c6c6c6;
    font-size: 14.500px;
    line-height: 20px;
    color: #444;
    padding-left: 10px;
    white-space: nowrap;
}
.st-count { width: 190px; letter-spacing: .55px; }
.st-lang { margin-left: 22px; width: 90px; }
.st-acc-t { margin-left: 3px; letter-spacing: .3px; }
.st-right {
    margin-left: auto;
    display: flex;
    align-items: center;
    height: 100%;
}
.st-note { margin-right: 6px; }
.st-cmt { margin-left: 24px; margin-right: 3px; }
.t-cmt { margin-right: 24px; }
.view {
    width: 50px;
    height: 100%;
    display: flex;
    align-items: center;
    justify-content: center;
}
.view.on {
    background: #c6c6c6;
}
.zoom-minus, .zoom-plus {
    position: relative;
    width: 10px;
    height: 10px;
    margin-left: 7px;
}
.zoom-minus::before, .zoom-plus::before {
    content: "";
    position: absolute;
    left: 0;
    right: 0;
    top: 4px;
    height: 1px;
    background: #555;
}
.zoom-plus::after {
    content: "";
    position: absolute;
    left: 4px;
    top: 0;
    bottom: 0;
    width: 1px;
    background: #555;
}
.slider {
    position: relative;
    width: 125px;
    height: 1px;
    margin-left: 6px;
    background: #555;
}
.mark {
    position: absolute;
    left: 62px;
    top: -4px;
    width: 1px;
    height: 9px;
    background: #555;
}
.knob {
    position: absolute;
    left: 50px;
    top: -7px;
    width: 6px;
    height: 15px;
    background: #666;
}
.pct { margin-left: 15px; width: 50px; }
.st-fit { margin-right: 8px; }
.desktop {
    height: 9px;
    background: linear-gradient(90deg, #e3eef9, #dfe6f4 70%, #e2edf9);
}
```
